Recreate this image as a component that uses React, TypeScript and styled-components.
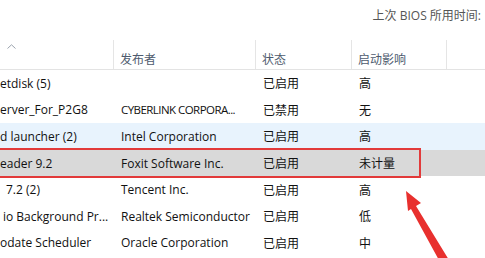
import React from 'react'
import styled, { createGlobalStyle } from 'styled-components'

const GlobalStyle = createGlobalStyle`
  html, body {
    margin: 0;
    padding: 0;
    background: #fff;
    overflow: hidden;
  }
  body {
    font-family: "Open Sans", "Noto Sans CJK SC", sans-serif;
    font-size: 12px;
    color: #1a1a1a;
  }
`

type Row = {
  name: string
  indent: number
  publisher: string
  condensed?: boolean
  status: string
  impact: string
  state?: 'hover' | 'selected'
}

const rows: Row[] = [
  { name: 'etdisk (5)', indent: 0, publisher: '', status: '已启用', impact: '高' },
  { name: 'erver_For_P2G8', indent: 0, publisher: 'CYBERLINK CORPORA...', condensed: true, status: '已禁用', impact: '无' },
  { name: 'd launcher (2)', indent: 0, publisher: 'Intel Corporation', status: '已启用', impact: '高', state: 'hover' },
  { name: 'eader 9.2', indent: 0, publisher: 'Foxit Software Inc.', status: '已启用', impact: '未计量', state: 'selected' },
  { name: '7.2 (2)', indent: 6, publisher: 'Tencent Inc.', status: '已启用', impact: '高' },
  { name: 'io Background Pr...', indent: 3, publisher: 'Realtek Semiconductor', status: '已启用', impact: '低' },
  { name: 'odate Scheduler', indent: 0, publisher: 'Oracle Corporation', status: '已启用', impact: '中' },
]

export default function App () {
  return (
    <Page>
      <GlobalStyle />
      <TopBar>上次 BIOS 所用时间:</TopBar>
      <Header>
        <HeadCell width={114}>
          <SortArrow width="9" height="5" viewBox="0 0 9 5">
            <path d="M0.5 4.5 L4.5 0.8 L8.5 4.5" fill="none" stroke="#9aa3ad" strokeWidth="1" />
          </SortArrow>
        </HeadCell>
        <HeadCell width={142}>发布者</HeadCell>
        <HeadCell width={96}>状态</HeadCell>
        <HeadCell width={95}>启动影响</HeadCell>
        <HeadCell />
      </Header>
      <List>
        {rows.map(row => (
          <RowLine key={row.name} state={row.state}>
            <Cell width={114} indent={row.indent}>{row.name}</Cell>
            <Cell width={142} condensed={row.condensed}>{row.publisher}</Cell>
            <Cell width={96}>{row.status}</Cell>
            <Cell width={95}>{row.impact}</Cell>
            {row.state === 'selected' && <Highlight />}
          </RowLine>
        ))}
      </List>
      <Arrow width="485" height="258" viewBox="0 0 485 258">
        <polygon
          points="406,191 421,203 416,206 449,260 440,262 411,209 408,211"
          fill="#e8302e"
        />
      </Arrow>
    </Page>
  )
}

const Page = styled.div`
  position: relative;
  width: 485px;
  height: 258px;
  overflow: hidden;
`

const TopBar = styled.div`
  height: 40px;
  display: flex;
  justify-content: flex-end;
  align-items: flex-start;
  padding: 6px 4px 0 0;
  box-sizing: border-box;
  color: #555;
  font-size: 12px;
`

const Header = styled.div`
  display: flex;
  height: 30px;
  border-bottom: 1px solid #e3e3e3;
  box-sizing: border-box;
`

const HeadCell = styled.div<{ width?: number }>`
  position: relative;
  flex: ${({ width }) => (width ? `0 0 ${width}px` : '1 1 auto')};
  box-sizing: border-box;
  border-right: ${({ width }) => (width ? '1px solid #e5e5e5' : 'none')};
  padding: 10px 0 0 6px;
  color: #4e5b6e;
  font-size: 12px;
`

const SortArrow = styled.svg`
  position: absolute;
  left: 7px;
  top: 4px;
`

const List = styled.div`
  display: flex;
  flex-direction: column;
`

const RowLine = styled.div<{ state?: 'hover' | 'selected' }>`
  position: relative;
  display: flex;
  align-items: center;
  height: 26.6px;
  background: ${({ state }) =>
    state === 'hover' ? '#e8f3fd' : state === 'selected' ? '#d9d9d9' : 'transparent'};
`

const Cell = styled.div<{ width: number, indent?: number, condensed?: boolean }>`
  flex: 0 0 ${({ width }) => width}px;
  box-sizing: border-box;
  padding-left: ${({ indent }) => (indent !== undefined ? indent : 7)}px;
  white-space: nowrap;
  overflow: hidden;
  font-size: ${({ condensed }) => (condensed ? '11.5px' : '12px')};
  letter-spacing: ${({ condensed }) => (condensed ? '-0.55px' : 'normal')};
  color: #111;
`

const Highlight = styled.div`
  position: absolute;
  left: -10px;
  top: -2px;
  bottom: -2px;
  width: 431px;
  border: 2.5px solid #e23a3a;
  box-sizing: border-box;
  pointer-events: none;
`

const Arrow = styled.svg`
  position: absolute;
  left: 0;
  top: 0;
  pointer-events: none;
`
